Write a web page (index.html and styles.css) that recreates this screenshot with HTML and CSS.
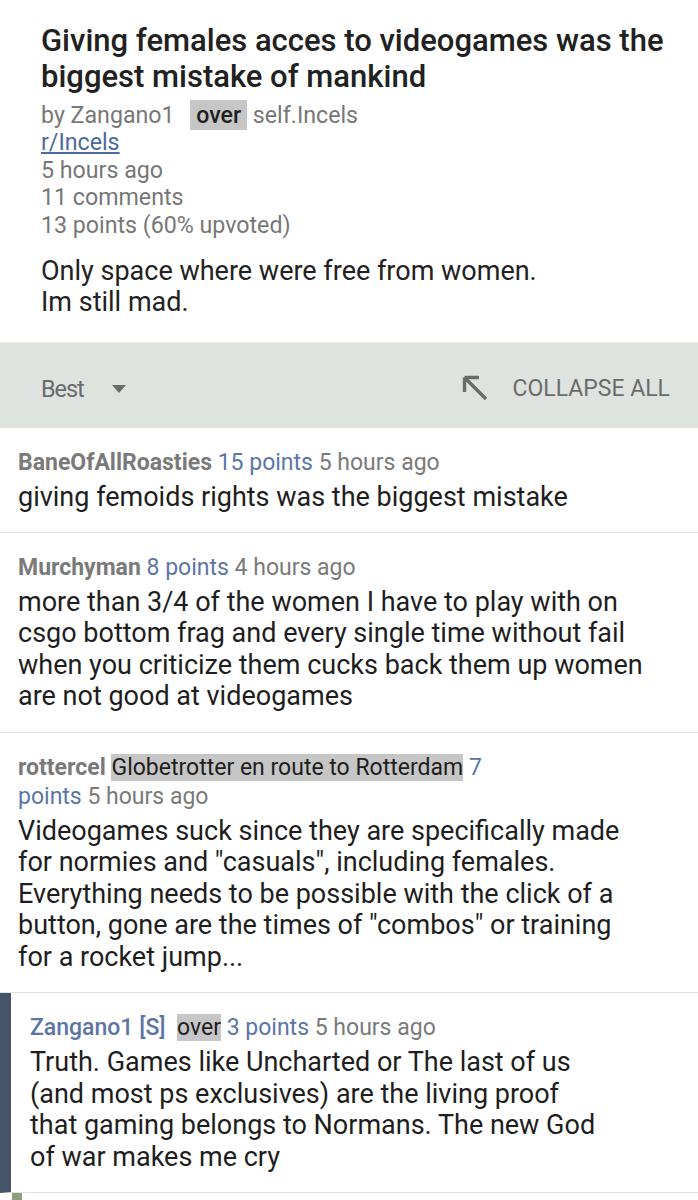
FILE: index.html
```html
<!DOCTYPE html>
<html>
<head>
<meta charset="utf-8">
<link rel="stylesheet" href="styles.css">
</head>
<body>
<div class="post">
  <h1 class="title">Giving females acces to videogames was the biggest mistake of mankind</h1>
  <div class="meta">
    <div>by Zangano1 &nbsp;<span class="flair">over</span> self.Incels</div>
    <div><a class="sub" href="#">r/Incels</a></div>
    <div>5 hours ago</div>
    <div>11 comments</div>
    <div>13 points (60% upvoted)</div>
  </div>
  <div class="selftext">Only space where were free from women.<br>Im still mad.</div>
</div>
<div class="sortbar">
  <div class="sort">
    <span>Best</span>
    <svg class="caret" width="14" height="8" viewBox="0 0 14 8"><path d="M0 0 L14 0 L7 8 Z" fill="#6b6b6b"/></svg>
  </div>
  <div class="collapse">
    <svg class="arrow" width="28" height="28" viewBox="0 0 28 28"><path d="M3.5 3.5 L25 25 M3.5 3.5 L3.5 18 M3.5 3.5 L18 3.5" stroke="#6b6b6b" stroke-width="3.4" fill="none" stroke-linecap="butt"/></svg>
    <span>COLLAPSE ALL</span>
  </div>
</div>
<div class="comment">
  <div class="chead"><span class="user">BaneOfAllRoasties</span> <span class="pts">15 points</span> <span class="time">5 hours ago</span></div>
  <div class="cbody">giving femoids rights was the biggest mistake</div>
</div>
<div class="comment">
  <div class="chead"><span class="user">Murchyman</span> <span class="pts">8 points</span> <span class="time">4 hours ago</span></div>
  <div class="cbody">more than 3/4 of the women I have to play with on csgo bottom frag and every single time without fail when you criticize them cucks back them up women are not good at videogames</div>
</div>
<div class="comment">
  <div class="chead"><span class="user">rottercel</span> <span class="cflair">Globetrotter en route to Rotterdam</span> <span class="pts">7</span> <span class="pts">points</span> <span class="time">5 hours ago</span></div>
  <div class="cbody">Videogames suck since they are specifically made for normies and "casuals", including females. Everything needs to be possible with the click of a button, gone are the times of "combos" or training for a rocket jump...</div>
</div>
<div class="comment reply">
  <div class="chead"><span class="op">Zangano1 [S]</span> &nbsp;<span class="cflair">over</span> <span class="pts">3 points</span> <span class="time">5 hours ago</span></div>
  <div class="cbody">Truth. Games like Uncharted or The last of us (and most ps exclusives) are the living proof that gaming belongs to Normans. The new God of war makes me cry</div>
</div>
<div class="comment next"></div>
</body>
</html>
```
FILE: styles.css
```css
* { box-sizing: border-box; }
html, body { margin: 0; padding: 0; background: #fff; }
body { font-family: Roboto, "Noto Sans", sans-serif; color: #222; width: 698px; overflow: hidden; }

.post { padding: 23px 20px 24px 41px; }
.title { margin: 0; font-size: 31px; line-height: 36px; font-weight: 500; color: #212121; }
.meta { margin-top: 7px; font-size: 23.2px; line-height: 27.4px; color: #777; }
.flair { background: #c6c6c6; color: #1e1e1e; padding: 1px 6px; margin-left: 4px; font-weight: 500; }
.sub { color: #4a6aa0; text-decoration: underline; }
.selftext { margin-top: 17px; font-size: 27px; line-height: 31px; color: #222; }

.sortbar { height: 86px; background: #dfe3df; border-top: 1px solid #e9ece9; display: flex; align-items: center; justify-content: space-between; padding: 6px 28px 0 41px; color: #6b6b6b; }
.sort { display: flex; align-items: center; gap: 28px; font-size: 23.5px; letter-spacing: -1.1px; }
.caret { margin-top: 1px; }
.collapse { display: flex; align-items: center; gap: 23px; font-size: 23px; }
.arrow { margin-top: -2px; }

.comment { padding: 19.5px 50px 19px 18px; border-bottom: 1.5px solid #e2e2e2; }
.chead { font-size: 23px; line-height: 29px; color: #7a7a7a; margin-right: 110px; }
.user { font-weight: 700; color: #7a7a7a; }
.op { font-weight: 500; color: #5b76a6; }
.pts { color: #5b76a6; }
.time { color: #7a7a7a; }
.cflair { background: #c6c6c6; color: #1e1e1e; line-height: 26px; }
.cbody { margin-top: 5px; font-size: 27px; line-height: 31.6px; color: #1e1e1e; }

.reply { border-left: 11px solid #455468; padding-left: 19px; padding-right: 92px; }
.reply .chead { margin-right: 0; }
.next { border-left: 10px solid #8aa07a; margin-left: 12px; height: 40px; border-bottom: none; padding: 0; }
```
